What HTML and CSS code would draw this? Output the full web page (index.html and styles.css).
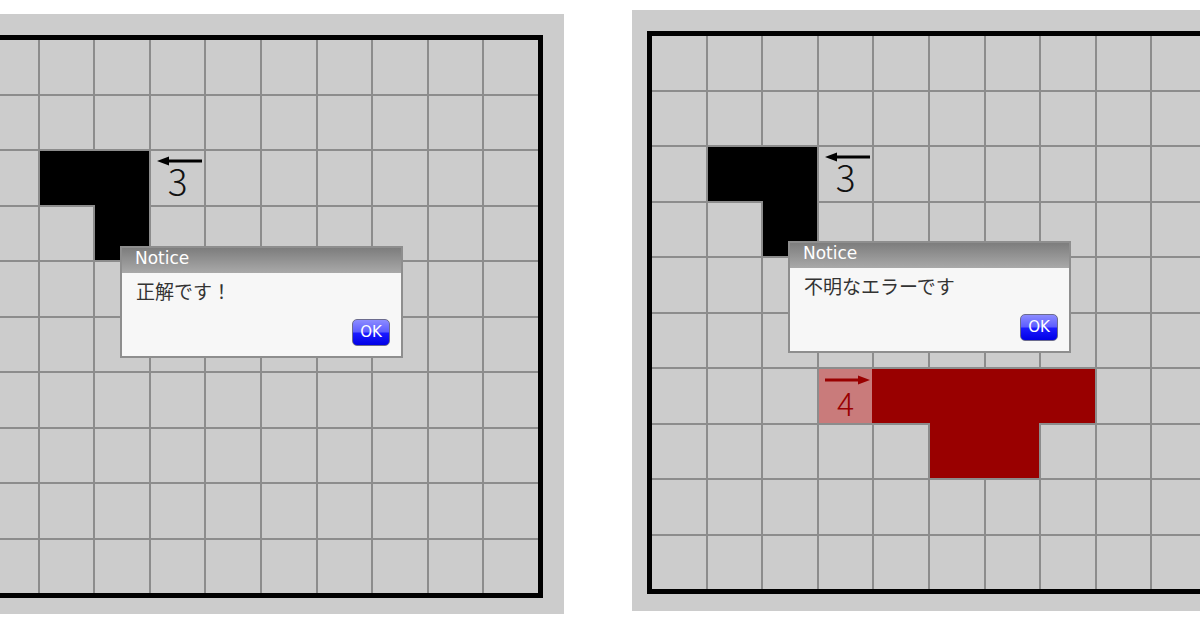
FILE: index.html
```html
<!DOCTYPE html>
<html lang="ja">
<head>
<meta charset="utf-8">
<title>Puzzle</title>
<link rel="stylesheet" href="styles.css">
</head>
<body>
<div class="stage">
  <div class="panel panel-left">
    <div class="board">
      <div class="piece black l-top"></div>
      <div class="piece black l-stem"></div>
      <div class="cell mark mark-3">
        <svg class="arrow arrow-left" width="45" height="10" viewBox="0 0 45 10"><line x1="9" y1="5" x2="45" y2="5" stroke="#000" stroke-width="2.8"/><polygon points="0,5 12,0.6 12,9.4" fill="#000"/></svg>
        <span class="num num-3">3</span>
      </div>
      <div class="cell"></div><div class="cell"></div><div class="cell"></div><div class="cell"></div><div class="cell"></div><div class="cell"></div><div class="cell"></div><div class="cell"></div><div class="cell"></div><div class="cell"></div>
      <div class="cell"></div><div class="cell"></div><div class="cell"></div><div class="cell"></div><div class="cell"></div><div class="cell"></div><div class="cell"></div><div class="cell"></div><div class="cell"></div><div class="cell"></div>
      <div class="cell"></div><div class="cell"></div><div class="cell"></div><div class="cell"></div><div class="cell"></div><div class="cell"></div><div class="cell"></div><div class="cell"></div><div class="cell"></div><div class="cell"></div>
      <div class="cell"></div><div class="cell"></div><div class="cell"></div><div class="cell"></div><div class="cell"></div><div class="cell"></div><div class="cell"></div><div class="cell"></div><div class="cell"></div><div class="cell"></div>
      <div class="cell"></div><div class="cell"></div><div class="cell"></div><div class="cell"></div><div class="cell"></div><div class="cell"></div><div class="cell"></div><div class="cell"></div><div class="cell"></div><div class="cell"></div>
      <div class="cell"></div><div class="cell"></div><div class="cell"></div><div class="cell"></div><div class="cell"></div><div class="cell"></div><div class="cell"></div><div class="cell"></div><div class="cell"></div><div class="cell"></div>
      <div class="cell"></div><div class="cell"></div><div class="cell"></div><div class="cell"></div><div class="cell"></div><div class="cell"></div><div class="cell"></div><div class="cell"></div><div class="cell"></div><div class="cell"></div>
      <div class="cell"></div><div class="cell"></div><div class="cell"></div><div class="cell"></div><div class="cell"></div><div class="cell"></div><div class="cell"></div><div class="cell"></div><div class="cell"></div><div class="cell"></div>
      <div class="cell"></div><div class="cell"></div><div class="cell"></div><div class="cell"></div><div class="cell"></div><div class="cell"></div><div class="cell"></div><div class="cell"></div><div class="cell"></div><div class="cell"></div>
      <div class="cell"></div><div class="cell"></div><div class="cell"></div><div class="cell"></div><div class="cell"></div><div class="cell"></div>

      <div class="dialog dialog-left">
        <div class="dialog-title">Notice</div>
        <div class="dialog-body">
          <div class="dialog-msg">正解です！</div>
          <div class="ok">OK</div>
        </div>
      </div>
    </div>
  </div>

  <div class="panel panel-right">
    <div class="board">
      <div class="piece black l-top"></div>
      <div class="piece black l-stem"></div>
      <div class="cell mark mark-3">
        <svg class="arrow arrow-left" width="45" height="10" viewBox="0 0 45 10"><line x1="9" y1="5" x2="45" y2="5" stroke="#000" stroke-width="2.8"/><polygon points="0,5 12,0.6 12,9.4" fill="#000"/></svg>
        <span class="num num-3">3</span>
      </div>
      <div class="piece red t-bar"></div>
      <div class="piece red t-stem"></div>
      <div class="cell mark mark-4">
        <svg class="arrow arrow-right" width="45" height="10" viewBox="0 0 45 10"><line x1="0" y1="5" x2="35" y2="5" stroke="#990000" stroke-width="2.8"/><polygon points="45,5 33,0.6 33,9.4" fill="#990000"/></svg>
        <span class="num num-4">4</span>
      </div>
      <div class="cell"></div><div class="cell"></div><div class="cell"></div><div class="cell"></div><div class="cell"></div><div class="cell"></div><div class="cell"></div><div class="cell"></div><div class="cell"></div><div class="cell"></div>
      <div class="cell"></div><div class="cell"></div><div class="cell"></div><div class="cell"></div><div class="cell"></div><div class="cell"></div><div class="cell"></div><div class="cell"></div><div class="cell"></div><div class="cell"></div>
      <div class="cell"></div><div class="cell"></div><div class="cell"></div><div class="cell"></div><div class="cell"></div><div class="cell"></div><div class="cell"></div><div class="cell"></div><div class="cell"></div><div class="cell"></div>
      <div class="cell"></div><div class="cell"></div><div class="cell"></div><div class="cell"></div><div class="cell"></div><div class="cell"></div><div class="cell"></div><div class="cell"></div><div class="cell"></div><div class="cell"></div>
      <div class="cell"></div><div class="cell"></div><div class="cell"></div><div class="cell"></div><div class="cell"></div><div class="cell"></div><div class="cell"></div><div class="cell"></div><div class="cell"></div><div class="cell"></div>
      <div class="cell"></div><div class="cell"></div><div class="cell"></div><div class="cell"></div><div class="cell"></div><div class="cell"></div><div class="cell"></div><div class="cell"></div><div class="cell"></div><div class="cell"></div>
      <div class="cell"></div><div class="cell"></div><div class="cell"></div><div class="cell"></div><div class="cell"></div><div class="cell"></div><div class="cell"></div><div class="cell"></div><div class="cell"></div><div class="cell"></div>
      <div class="cell"></div><div class="cell"></div><div class="cell"></div><div class="cell"></div><div class="cell"></div><div class="cell"></div><div class="cell"></div><div class="cell"></div><div class="cell"></div><div class="cell"></div>
      <div class="cell"></div><div class="cell"></div><div class="cell"></div><div class="cell"></div><div class="cell"></div><div class="cell"></div><div class="cell"></div><div class="cell"></div><div class="cell"></div>

      <div class="dialog dialog-right">
        <div class="dialog-title">Notice</div>
        <div class="dialog-body">
          <div class="dialog-msg">不明なエラーです</div>
          <div class="ok">OK</div>
        </div>
      </div>
    </div>
  </div>
</div>
</body>
</html>
```

FILE: styles.css
```css
* {
  box-sizing: border-box;
}

body {
  margin: 0;
  width: 1200px;
  height: 628px;
  overflow: hidden;
  background: #ffffff;
  font-family: "DejaVu Sans", "Noto Sans CJK JP", sans-serif;
}

.stage {
  display: flex;
  align-items: flex-start;
  gap: 68px;
}

.panel {
  flex: none;
  background: #cccccc;
}

.panel-left {
  margin-left: -36px;
  margin-top: 14px;
  padding: 21px 21px 16px 15px;
}

.panel-right {
  margin-top: 10px;
  padding: 21px 21px 17px 15px;
}

.board {
  position: relative;
  width: 564px;
  height: 563px;
  border: 5px solid #000000;
  display: grid;
  grid-template-columns: repeat(10, 1fr);
  grid-template-rows: repeat(10, 1fr);
  gap: 2px;
  background: #8c8c8c;
}

.cell {
  background: #cccccc;
}

.black {
  background: #000000;
}

.red {
  background: #990000;
}

.l-top {
  grid-row: 3;
  grid-column: 2 / 4;
}

.l-stem {
  grid-row: 3 / 5;
  grid-column: 3;
}

.t-bar {
  grid-row: 7;
  grid-column: 4 / 9;
}

.t-stem {
  grid-row: 7 / 9;
  grid-column: 6 / 8;
}

.mark {
  display: flex;
  flex-direction: column;
  align-items: flex-start;
  min-height: 0;
}

.mark-3 {
  grid-row: 3;
  grid-column: 4;
}

.mark-4 {
  grid-row: 7;
  grid-column: 4;
  background: #c97b7b;
}

.arrow {
  display: block;
  flex: none;
  margin-left: 6px;
}

.arrow-left {
  margin-top: 5px;
}

.arrow-right {
  margin-top: 6px;
}

.num {
  align-self: center;
  font-family: "Noto Sans CJK JP", "DejaVu Sans", sans-serif;
  font-weight: 300;
  height: 34px;
  line-height: 34px;
}

.num-3 {
  font-size: 37px;
  color: #111111;
  margin-top: -3px;
}

.num-4 {
  font-size: 32px;
  color: #990000;
  margin-top: 0;
}

.dialog {
  position: absolute;
  left: 136px;
  width: 283px;
  height: 112px;
  border: 2px solid #8e8e8e;
  background: #f7f7f7;
  display: flex;
  flex-direction: column;
}

.dialog-left {
  top: 206px;
}

.dialog-right {
  top: 205px;
}

.dialog-title {
  flex: none;
  height: 25px;
  line-height: 21px;
  padding-left: 13px;
  font-size: 17px;
  color: #ffffff;
  background: linear-gradient(#7d7d7d, #a9a9a9);
}

.dialog-body {
  flex: 1;
  display: flex;
  flex-direction: column;
  justify-content: space-between;
  padding: 6px 11px 10px 14px;
}

.dialog-msg {
  font-family: "Noto Sans CJK JP", sans-serif;
  font-size: 19px;
  line-height: 24px;
  color: #333333;
}

.ok {
  align-self: flex-end;
  width: 38px;
  height: 27px;
  border: 1px solid #6c6c8e;
  border-radius: 5px;
  background: linear-gradient(#8c8cff, #5c5cff 48%, #1c1cff 52%, #0000e6);
  color: #ffffff;
  font-family: "DejaVu Sans", sans-serif;
  font-size: 15px;
  line-height: 25px;
  text-align: center;
}
```
